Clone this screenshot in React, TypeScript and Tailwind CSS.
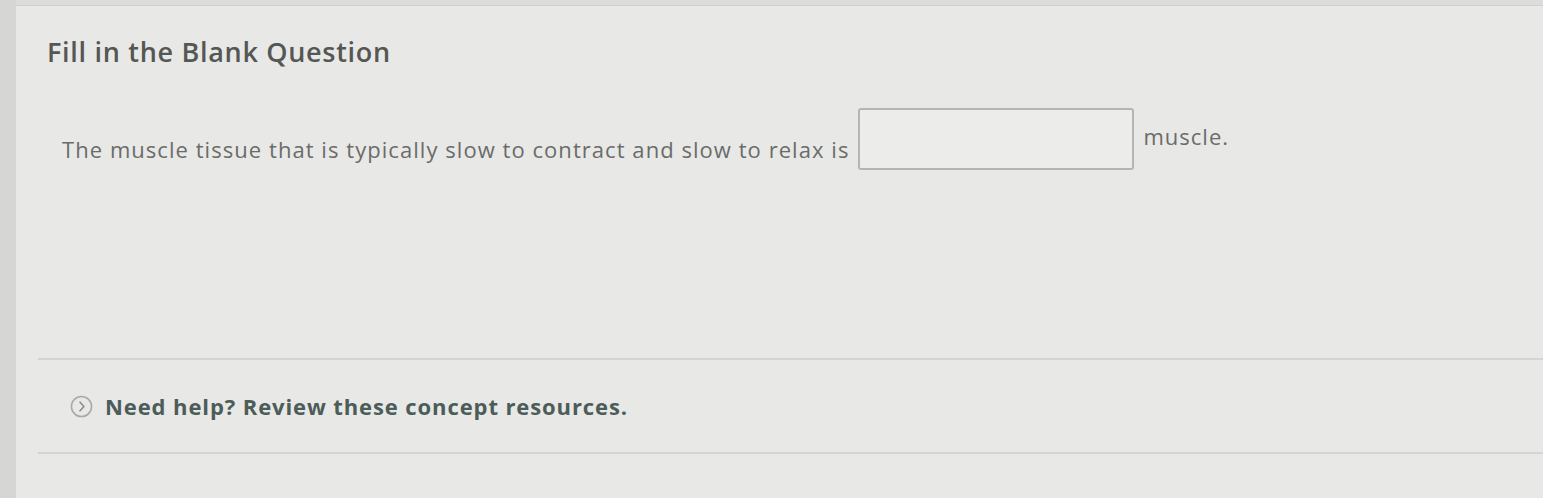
import React from 'react';

export default function App() {
  return (
    <div
      className="flex h-[498px] w-[1543px] overflow-hidden bg-[#dcdcda]"
      style={{ fontFamily: '"Open Sans", "Liberation Sans", sans-serif' }}
    >
      <div className="w-[16px] flex-none bg-[#d6d6d4]" />
      <div className="flex flex-1 flex-col pt-[5px]">
        <div className="flex flex-1 flex-col border-t border-[#d0d0ce] bg-[#e8e8e6]">
          <h1 className="pl-[31px] pt-[28px] text-[27px] font-semibold leading-[36px] tracking-[0.7px] text-[#555755]">
            Fill in the Blank Question
          </h1>

          <div className="flex items-center pl-[46px] pt-[38px]">
            <span className="mt-[20px] text-[22px] tracking-[1.05px] text-[#6a6c6a]">
              The muscle tissue that is typically slow to contract and slow to relax is
            </span>
            <div className="ml-[9px] h-[62px] w-[276px] rounded-[3px] border-2 border-[#b4b6b4] bg-[#ececea]" />
            <span className="ml-[9px] mb-[6px] text-[22px] tracking-[1px] text-[#6a6c6a]">muscle.</span>
          </div>

          <div className="ml-[22px] mt-[188px] flex h-[96px] items-center gap-[12px] border-y-2 border-[#d4d4d2] pl-[32px]">
            <svg width="23" height="23" viewBox="0 0 24 24" fill="none">
              <circle cx="12" cy="12" r="10.5" stroke="#a8aaa8" strokeWidth="1.6" />
              <path d="M10.5 7.5 L14.5 12 L10.5 16.5" stroke="#8a8c8a" strokeWidth="1.6" strokeLinecap="round" strokeLinejoin="round" />
            </svg>
            <span className="text-[22px] font-bold tracking-[0.9px] text-[#4c5c58]">
              Need help? Review these concept resources.
            </span>
          </div>
        </div>
      </div>
    </div>
  );
}
